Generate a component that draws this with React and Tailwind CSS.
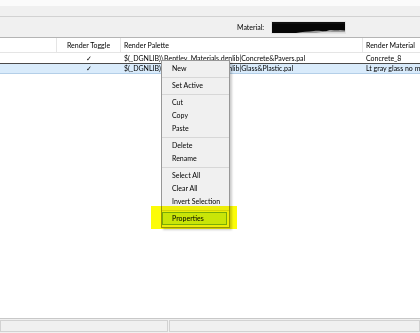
import React from 'react';

const menuItems = [
  'New', '-', 'Set Active', '-', 'Cut', 'Copy', 'Paste', '-',
  'Delete', 'Rename', '-', 'Select All', 'Clear All', 'Invert Selection', '-', 'Properties'
];

const rows = [
  { palette: '$(_DGNLIB)\\Bentley_Materials.dgnlib|Concrete&Pavers.pal', material: 'Concrete_8', selected: false },
  { palette: '$(_DGNLIB)\\Bentley_Materials.dgnlib|Glass&Plastic.pal', material: 'Lt gray glass no mirror', selected: true },
];

function Check() {
  return <span className="font-['DejaVu_Sans',sans-serif] text-[7px] leading-[10px]">✓</span>;
}

export default function App() {
  return (
    <div className="relative w-[420px] h-[333px] overflow-hidden bg-white flex flex-col font-['Lato',sans-serif] text-[7px] text-black">
      {/* top strips */}
      <div className="h-[6px] bg-[#fbfbfb]" />
      <div className="h-[10px] bg-[#f0f0f0]" />
      <div className="h-px bg-[#d2d2d2]" />
      <div className="h-[20px] bg-[#f0f0f0] flex items-center pl-[237px]">
        <span className="leading-none">Material:</span>
        <div className="ml-[7px] w-[75px] h-[13px] border border-[#e4e4e4] bg-white">
          <svg width="73" height="11" viewBox="0 0 73 11" className="block">
            <rect width="73" height="11" fill="#050505" />
            <path d="M0 1 L73 1" stroke="#2a2a2a" strokeWidth="0.6" />
            <path d="M24 11 C30 9.5 36 10 42 9 C48 8 52 10.5 56 8.5 C60 7 64 9 68 8 L73 8.5 L73 11 Z" fill="#9a9a9a" />
            <path d="M44 11 C50 10 55 9.5 60 10 L73 10 L73 11 Z" fill="#d8d8d8" />
          </svg>
        </div>
      </div>
      <div className="h-px bg-[#b4b4b4]" />

      {/* list view */}
      <div className="flex-1 bg-white flex flex-col">
        <div className="h-[15px] flex border-b border-[#e5e5e5] leading-[14px]">
          <div className="w-[57px] border-r border-[#e5e5e5]" />
          <div className="w-[64px] border-r border-[#e5e5e5] text-center">Render Toggle</div>
          <div className="w-[242px] border-r border-[#e5e5e5] pl-[3px]">Render Palette</div>
          <div className="flex-1 pl-[3px] whitespace-nowrap">Render Material</div>
        </div>
        {rows.map((r, i) => (
          <div
            key={i}
            className={r.selected
              ? 'h-[11px] flex border-t border-b border-t-[#4a4a4a] border-b-[#b4cfe8] bg-[#d9ebfb] leading-[9px]'
              : 'h-[10px] flex leading-[10px]'}
          >
            <div className="w-[57px] shrink-0" />
            <div className="w-[64px] shrink-0 text-center"><Check /></div>
            <div className="w-[242px] shrink-0 pl-[3px] whitespace-nowrap overflow-hidden">{r.palette}</div>
            <div className="flex-1 pl-[3px] whitespace-nowrap overflow-hidden">{r.material}</div>
          </div>
        ))}
      </div>

      {/* status bar */}
      <div className="h-[15px] border-t border-[#c8c8c8] bg-[#f0f0f0] flex gap-px pt-px">
        <div className="w-[168px] h-[12px] border border-[#d2d2d2]" />
        <div className="flex-1 h-[12px] border border-[#d2d2d2]" />
      </div>

      {/* context menu */}
      <div className="absolute left-[161px] top-[60px] w-[69px] h-[168px] bg-[#f0f0f0] border border-[#979797] shadow-[2px_2px_2px_rgba(0,0,0,0.2)] pt-px pb-[2px]">
        {menuItems.map((m, i) =>
          m === '-' ? (
            <div key={i} className="h-[4px] flex flex-col justify-center">
              <div className="h-px bg-[#d7d7d7]" />
            </div>
          ) : m === 'Properties' ? (
            <div key={i} className="h-[13px] mr-[2px] border border-[#78aee5] bg-[#cce8ff] pl-[9px] leading-[11px]">{m}</div>
          ) : (
            <div key={i} className="h-[13px] pl-[10px] leading-[13px] whitespace-nowrap">{m}</div>
          )
        )}
      </div>

      {/* highlighter mark */}
      <div className="absolute left-[151px] top-[206px] w-[86px] h-[23px] bg-[#fcfc08] mix-blend-multiply" />
    </div>
  );
}
